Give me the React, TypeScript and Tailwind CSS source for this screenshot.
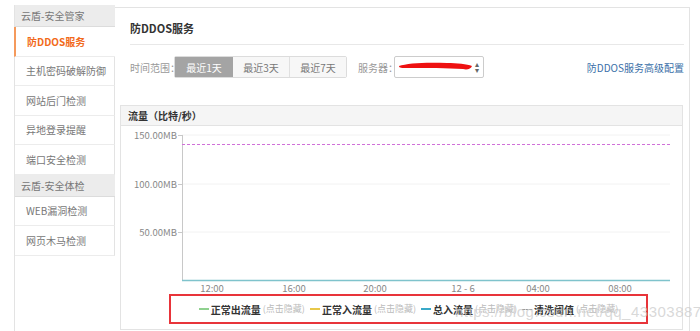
import React from 'react';

const font = { fontFamily: '"Noto Sans CJK SC", "Liberation Sans", sans-serif' };

const menu = [
  { type: 'head', label: '云盾-安全管家' },
  { type: 'item', label: '防DDOS服务', active: true },
  { type: 'item', label: '主机密码破解防御' },
  { type: 'item', label: '网站后门检测' },
  { type: 'item', label: '异地登录提醒' },
  { type: 'item', label: '端口安全检测' },
  { type: 'head', label: '云盾-安全体检' },
  { type: 'item', label: 'WEB漏洞检测' },
  { type: 'item', label: '网页木马检测' },
];

const Sidebar = () => (
  <aside className="w-[101px] shrink-0 mt-[5px] border-l border-[#e3e3e3] whitespace-nowrap">
    {menu.map((m, i) =>
      m.type === 'head' ? (
        <div key={i} className="h-[22px] flex items-center pl-[6px] bg-[#ececec] border-b border-[#dcdcdc] text-[10px] text-[#777]">
          {m.label}
        </div>
      ) : (
        <div
          key={i}
          className={`h-[29.5px] flex items-center pl-[11px] text-[10px] border-b border-[#ececec] ${
            m.active ? 'text-[#f26a1b] font-bold bg-white border-l-2 border-l-[#f59a5c] -ml-px pl-[10px]' : 'text-[#777] bg-white border-r border-r-[#e3e3e3]'
          }`}
        >
          {m.label}
        </div>
      )
    )}
  </aside>
);

const Chart = () => {
  const xs = [
    { x: 212, t: '12:00' },
    { x: 294, t: '16:00' },
    { x: 375, t: '20:00' },
    { x: 463, t: '12 - 6' },
    { x: 538, t: '04:00' },
    { x: 620, t: '08:00' },
  ];
  return (
    <svg width="561" height="168" viewBox="121 124 561 168" className="block">
      <line x1="182" y1="133" x2="670" y2="133" stroke="#f2f2f2" />
      <line x1="182" y1="182" x2="670" y2="182" stroke="#f2f2f2" />
      <line x1="182" y1="230" x2="670" y2="230" stroke="#f2f2f2" />
      <line x1="178" y1="133.5" x2="182" y2="133.5" stroke="#c8c8c8" />
      <line x1="178" y1="182.5" x2="182" y2="182.5" stroke="#c8c8c8" />
      <line x1="178" y1="230.5" x2="182" y2="230.5" stroke="#c8c8c8" />
      <line x1="182.5" y1="133" x2="182.5" y2="279" stroke="#c8c8c8" />
      <line x1="182" y1="142.5" x2="670" y2="142.5" stroke="#d070d8" strokeDasharray="3 2" />
      <line x1="182" y1="278.5" x2="670" y2="278.5" stroke="#7fc3cc" strokeWidth="1.5" />
      <g fontSize="9.5" fill="#888" style={font}>
        <text x="177" y="137" textAnchor="end">150.00MB</text>
        <text x="177" y="186" textAnchor="end">100.00MB</text>
        <text x="177" y="234" textAnchor="end">50.00MB</text>
        {xs.map((a) => (
          <text key={a.t} x={a.x} y="290" textAnchor="middle">{a.t}</text>
        ))}
      </g>
    </svg>
  );
};

const Legend = () => {
  const items = [
    { c: '#8fd18f', l: '正常出流量', dash: false },
    { c: '#e8c84a', l: '正常入流量', dash: false },
    { c: '#3aa9c8', l: '总入流量', dash: false },
    { c: '#999', l: '清洗阈值', dash: true },
  ];
  return (
    <div className="ml-[48px] w-[479px] h-[30px] border-2 border-[#e8343a] flex items-center justify-center gap-[5px] text-[10px] whitespace-nowrap">
      {items.map((it) => (
        <div key={it.l} className="flex items-center gap-[2px]">
          <span
            className={`inline-block w-[10px] ${it.dash ? 'border-t border-dashed' : 'border-t-2'}`}
            style={{ borderColor: it.c }}
          />
          <span className="font-bold text-[#333]">{it.l}</span>
          <span className="text-[#bbb] text-[9px]">(点击隐藏)</span>
        </div>
      ))}
    </div>
  );
};

export default function App() {
  return (
    <div className="w-[700px] h-[331px] overflow-hidden bg-white flex pl-[14px] relative" style={font}>
      <Sidebar />
      <main className="mt-[7px] w-[575px] h-[330px] border-t border-r border-[#e3e3e3] pl-[15px] pr-[5px] whitespace-nowrap">
        <div className="h-[37px] flex items-end pb-[8px] border-b border-[#e8e8e8] text-[11px] font-bold text-[#333]">
          防DDOS服务
        </div>
        <div className="mt-[11px] flex items-center h-[22px] text-[10px] text-[#999]">
          <span className="w-[44px]">时间范围：</span>
          <div className="flex h-[22px] border border-[#dcdcdc] rounded-[2px]">
            <span className="w-[58px] flex items-center justify-center bg-[#a4a4a4] text-white">最近1天</span>
            <span className="w-[57px] flex items-center justify-center bg-[#f7f7f7] text-[#777] border-r border-[#e0e0e0]">最近3天</span>
            <span className="w-[56px] flex items-center justify-center bg-[#f7f7f7] text-[#777]">最近7天</span>
          </div>
          <span className="ml-[11px] w-[36px]">服务器：</span>
          <div className="relative w-[90px] h-[22px] border border-[#ccc] rounded-[2px] bg-white flex items-center">
            <svg width="80" height="14" viewBox="0 0 80 14" className="ml-[2px]">
              <path d="M2 6 C10 3, 30 2, 50 3 C60 3, 70 4, 75 6 C74 9, 70 10, 66 9 C50 8, 30 8, 10 8 C5 8, 2 8, 2 6 Z" fill="#ee1111" />
            </svg>
            <span className="absolute right-[4px] top-[4px] text-[8px] leading-[6px] text-[#666] flex flex-col">
              <span>▴</span>
              <span>▾</span>
            </span>
          </div>
          <span className="ml-auto text-[#3a6fa8]">防DDOS服务高级配置</span>
        </div>
        <div className="mt-[27px] w-[563px] -ml-[10px] h-[225px] border border-[#e3e3e3]">
          <div className="h-[20px] bg-[#f5f5f5] border-b border-[#e3e3e3] flex items-center pl-[7px] text-[10px] font-bold text-[#333]">
            流量（比特/秒）
          </div>
          <Chart />
          <Legend />
        </div>
      </main>
      <div className="absolute left-[455px] top-[301px] text-[15px] text-[#c8c8c8]/70 tracking-[0.5px]" style={{ fontFamily: '"Liberation Sans", sans-serif' }}>
        https://blog.csdn.net/qq_43303887
      </div>
    </div>
  );
}
